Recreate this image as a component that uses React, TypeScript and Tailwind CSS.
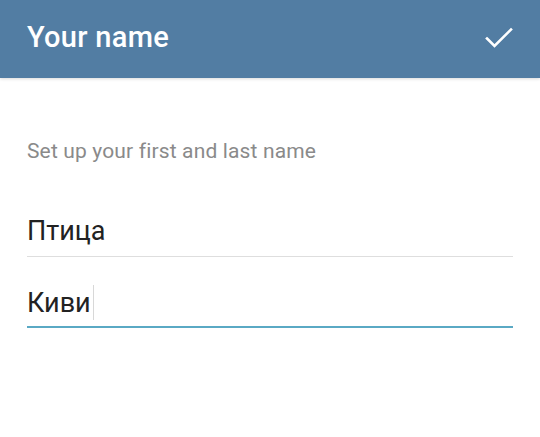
import React from "react";

export default function App() {
  return (
    <div className="w-[540px] h-[437px] bg-white overflow-hidden" style={{ fontFamily: "Roboto, 'Noto Sans', sans-serif" }}>
      <div className="h-[78px] bg-[#527da3] flex items-center justify-between pl-[27px] pr-[27px] shadow-[0_1px_3px_rgba(0,0,0,0.15)] relative">
        <div className="text-white text-[29px] tracking-[0.3px] font-medium leading-none mt-[-4px]">Your name</div>
        <svg width="28" height="22" viewBox="0 0 28 22" className="mt-[-2px]">
          <path d="M2 11.5 L9.5 19 L26 2.5" fill="none" stroke="white" strokeWidth="2.6" strokeLinecap="square" />
        </svg>
      </div>
      <div className="px-[27px] pt-[63px]">
        <div className="text-[21px] tracking-[0.15px] text-[#8a8a8a] leading-none">Set up your first and last name</div>
        <div className="mt-[53px] border-b border-[#dedede] pb-[9px] w-[486px]">
          <div className="text-[27px] text-[#222222] leading-[32px]">Птица</div>
        </div>
        <div className="mt-[28px] border-b-2 border-[#5aa9c4] pb-[6px] w-[486px]">
          <div className="text-[27px] text-[#222222] leading-[32px] flex items-center">
            Киви<span className="inline-block w-px h-[35px] bg-[#d8d8d8] ml-[2px]" />
          </div>
        </div>
      </div>
    </div>
  );
}
